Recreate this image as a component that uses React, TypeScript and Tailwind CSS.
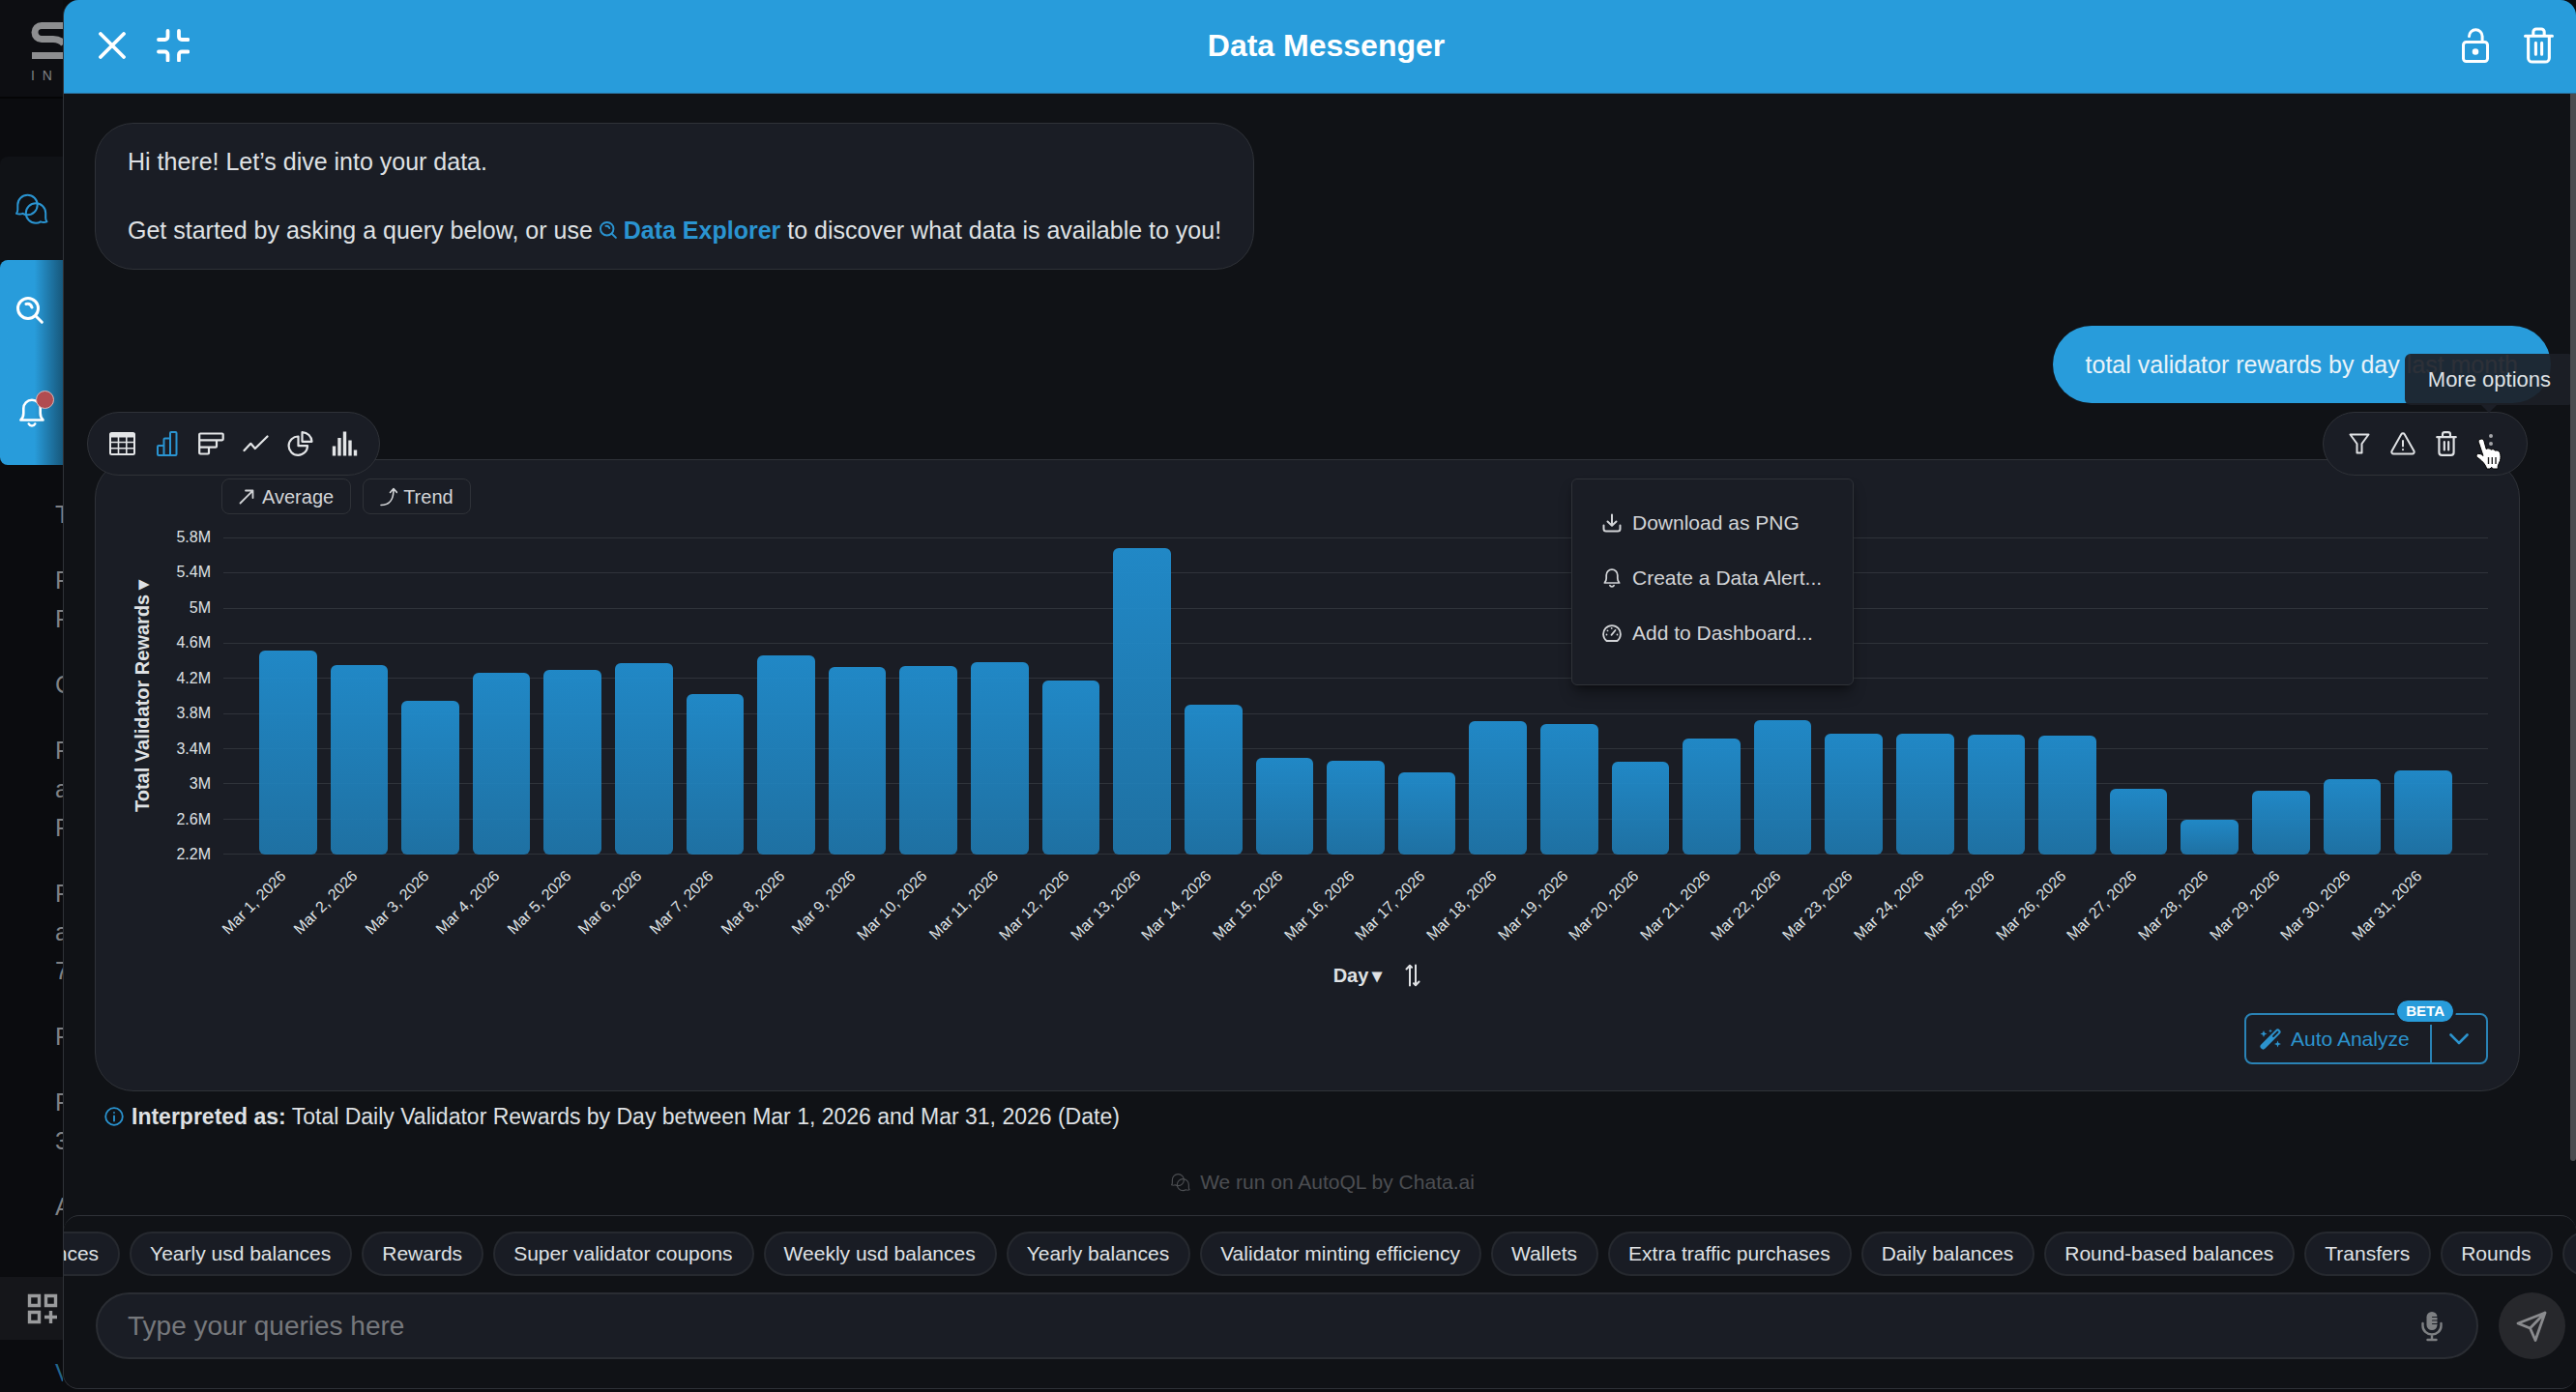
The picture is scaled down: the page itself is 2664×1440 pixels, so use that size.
import type { ReactNode } from 'react'

const REWARDS = [
  4.52, 4.35, 3.95, 4.26, 4.3, 4.37, 4.02, 4.46, 4.33, 4.34, 4.38, 4.18, 5.68, 3.9, 3.3, 3.26, 3.13,
  3.72, 3.68, 3.25, 3.52, 3.73, 3.57, 3.57, 3.56, 3.55, 2.95, 2.59, 2.93, 3.06, 3.15,
]
const AXIS_MIN = 2.2
const AXIS_MAX = 5.8
const TICKS = ['5.8M', '5.4M', '5M', '4.6M', '4.2M', '3.8M', '3.4M', '3M', '2.6M', '2.2M']

const TOPICS = [
  'Yearly usd balances',
  'Rewards',
  'Super validator coupons',
  'Weekly usd balances',
  'Yearly balances',
  'Validator minting efficiency',
  'Wallets',
  'Extra traffic purchases',
  'Daily balances',
  'Round-based balances',
  'Transfers',
  'Rounds',
  'Balances',
]

// Rows of the page that stays visible behind the drawer
const BACKDROP_ROWS = [['T'], ['F', 'F'], ['C'], ['F', 'a', 'F'], ['F', 'a', '7'], ['F'], ['F', '3'], ['A']]

interface IconProps {
  className: string
  box: string
  width?: number
  children: ReactNode
}

const Icon = ({ className, box, width = 2, children }: IconProps) => (
  <svg
    aria-hidden
    viewBox={box}
    className={`shrink-0 ${className}`}
    fill="none"
    stroke="currentColor"
    strokeWidth={width}
    strokeLinecap="round"
    strokeLinejoin="round"
  >
    {children}
  </svg>
)

const BUBBLE =
  'M1 20.8c1-1.2 1.3-2.4 1.3-3.8v-5a10.2 10.2 0 1 1 10.2 10.2c-2.2 0-3.8-.6-5-1.4-2 .9-4.4.9-6.5 0z'

const BubblesIcon = ({ className }: { className: string }) => (
  <Icon className={className} box="0 0 34 32">
    <path d={BUBBLE} />
    <path d={BUBBLE} transform="translate(33.5 8.5) scale(-1 1)" />
  </Icon>
)

const SearchIcon = ({ className, width = 3 }: { className: string; width?: number }) => (
  <Icon className={className} box="0 0 28 28" width={width}>
    <circle cx="12" cy="12" r="10.5" />
    <path d="M19.8 19.8 26.3 26.3M10 7.5c3-.8 5.2.8 6 3.5" />
  </Icon>
)

const TrashIcon = ({ className }: { className: string }) => (
  <Icon className={className} box="0 0 30 36" width={3}>
    <path d="M1.5 8.5h27M4.5 8.5v22a4 4 0 0 0 4 4h13a4 4 0 0 0 4-4v-22M9.5 8V4.5a3 3 0 0 1 3-3h5a3 3 0 0 1 3 3V8M12 15.5v11.5M18 15.5v11.5" />
  </Icon>
)

const BellIcon = ({ className }: { className: string }) => (
  <Icon className={className} box="0 0 26 30" width={2.6}>
    <path d="M1.5 22.5h23c-2-2-2.8-4-2.8-7v-5a8.7 8.7 0 0 0-17.4 0v5c0 3-.8 5-2.8 7zM9.8 26.5c1.2 2.6 5.2 2.6 6.4 0" />
  </Icon>
)

const CHART_TYPES = [
  {
    label: 'Table',
    icon: (
      <Icon className="w-[27px] h-6" box="0 0 27 24">
        <rect x="1" y="1" width="25" height="22" rx="1.5" />
        <path d="M1.5 3.5h24" strokeWidth={4} />
        <path d="M9.5 4v18M17.8 4v18M1 10.5h25M1 16.8h25" strokeWidth={1.6} />
      </Icon>
    ),
  },
  {
    label: 'Column chart',
    active: true,
    icon: (
      <Icon className="w-[27px] h-[26px]" box="-3 0 27 26">
        <path d="M1 16a1 1 0 0 1 1-1h5.5v10H2a1 1 0 0 1-1-1zM7.5 8.5a1 1 0 0 1 1-1H14V25H7.5zM14 2a1 1 0 0 1 1-1h4.500a1 1 0 0 1 1 1v22a1 1 0 0 1-1 1H14z" />
      </Icon>
    ),
  },
  {
    label: 'Bar chart',
    icon: (
      <Icon className="w-[27px] h-6" box="0 0 27 24" width={2.2}>
        <path d="M1.2 2.500a1 1 0 0 1 1-1h22.500a1 1 0 0 1 1 1v4.800a1 1 0 0 1-1 1H1.200zM1.200 8.500h17.800v6.200a1 1 0 0 1-1 1H1.200zM1.200 15.500h9.800v6a1 1 0 0 1-1 1H2.200a1 1 0 0 1-1-1z" />
      </Icon>
    ),
  },
  {
    label: 'Line chart',
    icon: (
      <Icon className="w-[27px] h-6" box="0 0 27 24" width={2.2}>
        <path d="M1.500 19 8.300 11.800 12.800 17 25.500 4.500" />
      </Icon>
    ),
  },
  {
    label: 'Pie chart',
    icon: (
      <Icon className="w-[27px] h-[26px]" box="0 0 27 26" width={2.2}>
        <path d="M11.500 5.500A9.700 9.700 0 1 0 21 15.200h-9.500zM15.500 1.200v9.600h10c-.3-5.600-4.400-9.300-10-9.600z" />
      </Icon>
    ),
  },
  {
    label: 'Histogram',
    icon: (
      <Icon className="w-[27px] h-[26px]" box="0 0 27 26" width={3.4}>
        <path d="M2.500 15.500v10M8 7v18.500M13.500 .5v25M19 9.500v16M24.500 19.500v6" strokeLinecap="butt" />
      </Icon>
    ),
  },
]

const MENU_ITEMS = [
  {
    label: 'Download as PNG',
    icon: (
      <Icon className="size-5" box="0 0 20 20">
        <path d="M10 1.500v11M5.500 8.500l4.500 4.300 4.500-4.300M1.500 12.500v3.500a2.500 2.500 0 0 0 2.500 2.500h12a2.500 2.500 0 0 0 2.500-2.500v-3.500" />
      </Icon>
    ),
  },
  { label: 'Create a Data Alert...', icon: <BellIcon className="size-5" /> },
  {
    label: 'Add to Dashboard...',
    icon: (
      <Icon className="size-5" box="0 0 20 20" width={1.8}>
        <path d="M4.500 18a8.900 8.900 0 1 1 11 0z" />
        <path d="M9.500 11.800 13.500 7M4.500 11.500v.1M5.500 7.300v.1M9.700 4.800v.1M15.500 11.500v.1" />
      </Icon>
    ),
  },
]

const EdgeTabs = () => (
  <nav className="absolute inset-x-0 top-[162px] flex flex-col">
    <button
      aria-label="Data Messenger"
      className="flex h-[107px] items-center rounded-tl-lg bg-[#101216] pl-4 text-[#2a94d1]"
    >
      <BubblesIcon className="w-[34px] h-8" />
    </button>
    <div className="flex flex-col rounded-l-lg bg-linear-to-r from-[#289cdb] from-55% to-[#17587c] text-white">
      <button aria-label="Data Explorer" className="flex h-[104px] items-center pl-[17px]">
        <SearchIcon className="size-7" />
      </button>
      <button aria-label="Notifications" className="flex h-[108px] items-center pl-5">
        <span className="relative">
          <BellIcon className="w-[26px] h-[30px]" />
          <span className="absolute -top-2 -right-2.5 size-[19px] rounded-full border border-[#d9b6b8] bg-[#b14c50]" />
        </span>
      </button>
    </div>
  </nav>
)

const Backdrop = () => (
  <aside className="relative flex w-[65px] shrink-0 flex-col overflow-hidden bg-[#0b0c0f] text-[#7f8184]">
    <header className="flex h-[102px] flex-col items-start gap-2.5 border-b-2 border-[#050506] bg-[#0d0e12] pt-[22px] pl-8">
      <svg aria-hidden viewBox="0 0 34 40" className="h-10 w-[34px] shrink-0" fill="none" stroke="#8d8e90" strokeWidth={7}>
        <path d="M34 4.500H11a7 7 0 0 0 0 14h12c6 0 9.500 3 11 5M1 35.500h33" />
      </svg>
      <span className="text-sm whitespace-pre leading-3">I  N</span>
    </header>
    <div className="mt-[410px] flex flex-col gap-7 pl-[57px] text-[25px] leading-10">
      {BACKDROP_ROWS.map((lines, i) => (
        <div key={i}>
          {lines.map((line, j) => (
            <p key={j}>{line}</p>
          ))}
        </div>
      ))}
    </div>
    <div className="mt-[53px] flex h-[65px] shrink-0 items-center bg-[#15161a] pl-7">
      <svg aria-hidden viewBox="0 0 32 32" className="size-8" fill="none" stroke="#9a9b9d" strokeWidth={3.4}>
        <path d="M2.500 2.500h10v10h-10zM19.500 2.500h10v10h-10zM2.500 19.500h10v10h-10zM24.500 18v13M18 24.500h13" />
      </svg>
    </div>
    <p className="pt-3.5 pl-[57px] text-[25px] leading-10 text-[#22648b]">V</p>
    <EdgeTabs />
  </aside>
)

const DrawerHeader = () => (
  <header className="grid h-[97px] shrink-0 grid-cols-[1fr_auto_1fr] items-center border-b border-[#2b6f99] bg-[#289cdb] pr-[23px] pb-0.5 pl-9 text-white">
    <div className="flex items-center gap-8">
      <button aria-label="Close">
        <Icon className="size-7" box="0 0 28 28" width={3.8}>
          <path d="M2 2l24 24M26 2 2 26" />
        </Icon>
      </button>
      <button aria-label="Exit full screen">
        <Icon className="size-[34px]" box="0 0 34 34" width={3.8}>
          <path d="M2 11h6.500a3 3 0 0 0 3-3V2M23 2v6a3 3 0 0 0 3 3h6.500M2 23.500h6.500a3 3 0 0 1 3 3v6M23 32.500v-6a3 3 0 0 1 3-3h6.500" />
        </Icon>
      </button>
    </div>
    <h1 className="text-[32px] leading-10 font-bold">Data Messenger</h1>
    <div className="flex items-center justify-end gap-9">
      <button aria-label="Unlock drawer">
        <Icon className="w-7 h-9" box="0 0 28 36" width={3}>
          <rect x="1.500" y="14.500" width="25" height="20" rx="3" />
          <path d="M7.500 8.500a6.800 6.800 0 0 1 13.600 0V14" />
          <circle cx="14" cy="24.500" r="1.800" fill="currentColor" />
        </Icon>
      </button>
      <button aria-label="Clear messages">
        <TrashIcon className="w-[31px] h-[38px]" />
      </button>
    </div>
  </header>
)

const RewardsChart = () => (
  <div className="mt-6 flex pr-8 pl-9">
    <button className="flex w-6 rotate-180 items-center justify-center gap-1 text-xl leading-6 font-bold whitespace-nowrap [text-orientation:sideways] [writing-mode:vertical-rl]">
      Total Validator Rewards <span className="leading-6">▾</span>
    </button>
    <div className="-my-2 flex w-[59px] flex-col justify-between text-right text-base leading-4">
      {TICKS.map((tick) => (
        <span key={tick}>{tick}</span>
      ))}
    </div>
    <div className="relative ml-[13px] flex-1">
      <div className="absolute inset-0 flex flex-col justify-between">
        {TICKS.map((tick) => (
          <div key={tick} className="h-px bg-[#2f333a]" />
        ))}
      </div>
      <div className="relative flex h-[328px] px-[30px]">
        {REWARDS.map((value, i) => (
          <div key={i} className="relative flex flex-1 flex-col justify-end px-[7px]">
            <div
              className="rounded-md bg-linear-to-b from-[#2190d2]/93 to-[#1f7db5]/87"
              style={{ height: `${((value - AXIS_MIN) / (AXIS_MAX - AXIS_MIN)) * 100}%` }}
            />
            <span className="absolute top-full right-1/2 mt-3.5 mr-2.5 origin-top-right -rotate-45 text-base leading-4 whitespace-nowrap">
              Mar {i + 1}, 2026
            </span>
          </div>
        ))}
      </div>
    </div>
  </div>
)

const ResponseCard = () => (
  <article className="relative flex flex-col rounded-[40px] border border-[#2f3238] bg-[#1a1d25] pb-[27px]">
    <div className="flex gap-3 pt-[19px] pl-[130px] text-xl leading-6 text-[#d2d4d7]">
      <button className="flex h-[37px] items-center gap-2 rounded-lg border border-[#2f3238] px-[17px]">
        <Icon className="size-4" box="0 0 16 16" width={1.8}>
          <path d="M1.500 14.500 14 2M7 1.500h7.500V9" />
        </Icon>
        Average
      </button>
      <button className="flex h-[37px] items-center gap-1.5 rounded-lg border border-[#2f3238] px-[17px]">
        <Icon className="w-[18px] h-5" box="0 0 18 20" width={1.6}>
          <path d="M1 18.500c9 0 13-5 13-16.500M10.500 5.500 14 1.500l3.500 4" />
        </Icon>
        Trend
      </button>
    </div>

    <RewardsChart />

    <div className="mt-[109px] flex h-8 items-center justify-center gap-6 pl-[144px]">
      <button className="flex items-center gap-1 text-xl leading-6 font-bold">
        Day <span className="leading-6">▾</span>
      </button>
      <button aria-label="Sort">
        <Icon className="w-4 h-6" box="0 0 16 24">
          <path d="M5 22.500V2M1.500 5.500 5 1.800l2 2M11 1.500V22M14.500 18.500 11 22.200l-2-2" />
        </Icon>
      </button>
    </div>

    <div className="mt-[23px] mr-8 flex self-end rounded-lg border-2 border-[#2a83b6] text-[21px] text-[#2c93cd]">
      <button className="relative flex h-[49px] w-[192px] items-center gap-2.5 border-r-2 border-[#2a83b6] pl-[14px]">
        <Icon className="size-[22px]" box="0 0 22 22" width={1}>
          <path d="M3.500 18.500 18.500 3.500" strokeWidth={6} />
          <path d="M14 8 18.500 3.500" stroke="#1a1d25" strokeWidth={1.800} />
          <path
            d="M4 2l1 2.500L7.500 5.500 5 6.500 4 9 3 6.500.5 5.500 3 4.500zM11 .5l.6 1.400L13 2.500l-1.400.6L11 4.500l-.6-1.400L9 2.500l1.400-.6zM18.500 12.500l.9 2.600 2.600.9-2.600.9-.9 2.600-.9-2.600-2.600-.9 2.600-.9z"
            fill="currentColor"
            stroke="none"
          />
        </Icon>
        Auto Analyze
        <span className="absolute -top-[15px] -right-6 rounded-full bg-[#289cdb] px-[9px] text-[15px] leading-[22px] font-bold text-white outline-3 outline-[#1a1d25]">
          BETA
        </span>
      </button>
      <button aria-label="Analysis options" className="flex w-[56px] items-center justify-center">
        <Icon className="w-5 h-3" box="0 0 20 12" width={2.600}>
          <path d="M1.500 1.500 10 10l8.500-8.500" />
        </Icon>
      </button>
    </div>

    <div className="absolute -top-[50px] -left-[9px] flex h-[66px] items-center gap-[19px] rounded-full border border-[#2f3238] bg-[#1a1d25] px-[22px]">
      {CHART_TYPES.map(({ label, active, icon }) => (
        <button key={label} aria-label={label} className={active ? 'text-[#2a94d1]' : 'text-[#e3e5e7]'}>
          {icon}
        </button>
      ))}
    </div>

    <div className="absolute -top-[50px] -right-[9px] flex h-[66px] w-[212px] items-center gap-[21px] rounded-full border border-[#2f3238] bg-[#1a1d25] pl-[26px]">
      <button aria-label="Filter">
        <Icon className="size-[22px]" box="0 0 22 22">
          <path d="M1.500 1.500h19L13.500 11v9.500h-5V11z" />
        </Icon>
      </button>
      <button aria-label="Report a problem">
        <Icon className="w-[26px] h-6" box="0 0 26 24">
          <path d="M11.300 2.300 1.600 19.500a2 2 0 0 0 1.700 3h19.400a2 2 0 0 0 1.700-3L14.700 2.300a2 2 0 0 0-3.400 0zM13 9v5.500M13 18v.2" />
        </Icon>
      </button>
      <button aria-label="Delete">
        <TrashIcon className="w-[22px] h-[26px]" />
      </button>
      <button aria-label="More options" aria-expanded className="ml-2 text-[#a5a6a9]">
        <Icon className="w-3 h-6" box="0 0 12 24" width={4}>
          <path d="M6 4v.1M6 12v.1M6 20v.1" />
        </Icon>
      </button>
      <div
        role="tooltip"
        className="absolute -top-[61px] -right-[49px] rounded-md bg-[#1c1f27]/92 px-6 text-[22px] leading-[53px] whitespace-nowrap after:absolute after:top-full after:right-20 after:border-8 after:border-transparent after:border-t-[#1c1f27]"
      >
        More options
      </div>
      <svg aria-hidden viewBox="0 0 28 33" className="absolute top-[26px] right-[25px] h-[33px] w-7">
        <path
          d="M5 1.300c1.900-.7 3.400.2 4 2.200l2.200 8c2-1.200 3.900-.7 4.700.7 1.900-1 3.900-.3 4.500 1 2-.8 4.300.1 5 2.200.8 2.800.9 5.300.1 8.100l-2.300 5.500V32h-5l-1.500-1.700L15 32h-3.200l-1.500-3.500c-2-3.400-5-6-8.300-8.200-1.500-1.200-1.200-3.200.5-3.800 2-.6 4 .6 5.500 2L3.300 4.500C2.900 3 3.500 1.800 5 1.300z"
          fill="#fff"
          stroke="#000"
          strokeWidth={1}
        />
        <path d="M13.500 20v7M17.300 20v7M21 20v7" stroke="#222" strokeWidth={1.400} />
      </svg>
    </div>

    <ul className="absolute top-[19px] right-[688px] flex h-[214px] w-[292px] flex-col rounded-md border border-[#2f3238] bg-[#1a1d25] pt-4 shadow-lg shadow-black/40">
      {MENU_ITEMS.map(({ label, icon }) => (
        <li key={label}>
          <button className="flex h-[57px] w-full items-center gap-[11px] pl-[31px] text-[21px] text-[#d2d4d7]">
            {icon}
            {label}
          </button>
        </li>
      ))}
    </ul>
  </article>
)

const Pill = ({ className = '', children }: { className?: string; children: ReactNode }) => (
  <button
    className={`h-[46px] shrink-0 rounded-full border-2 border-[#26292f] bg-[#191c24] pr-5 pl-[19px] text-[21px] whitespace-nowrap ${className}`}
  >
    {children}
  </button>
)

const Composer = () => (
  <footer className="shrink-0 rounded-t-2xl border-t border-[#2f3238] bg-[#101216] pb-[30px]">
    <div className="flex gap-2.5 overflow-hidden pt-4">
      <Pill className="-ml-[69px]">balances</Pill>
      {TOPICS.map((topic) => (
        <Pill key={topic}>{topic}</Pill>
      ))}
    </div>
    <form className="mt-[17px] flex gap-[21px] pr-[11px] pl-[33px]">
      <div className="flex h-[69px] flex-1 items-center rounded-full border-2 border-[#2a2d33] bg-[#1a1d25] pr-[35px] pl-[31px]">
        <input
          aria-label="Query"
          placeholder="Type your queries here"
          className="flex-1 bg-transparent text-[28px] outline-none placeholder:text-[#76787c]"
        />
        <button type="button" aria-label="Use microphone" className="text-[#7e8083]">
          <Icon className="w-[22px] h-8" box="0 0 22 32" width={2.400}>
            <rect x="5.500" y="1" width="11" height="19" rx="5.500" fill="currentColor" stroke="none" />
            <path d="M1.500 13v2.500a9.500 9 0 0 0 19 0V13M11 25v5M6.500 30h9" />
            <path d="M11.500 6.500H17M11.500 10H17M11.500 13.500H17" stroke="#1a1d25" strokeWidth={1.200} />
          </Icon>
        </button>
      </div>
      <button
        aria-label="Send"
        className="flex size-[69px] items-center justify-center rounded-full bg-[#27282c] pr-0.5 text-[#8a8b8e]"
      >
        <Icon className="size-8" box="0 0 32 32" width={2.800}>
          <path d="M30 2 2 13l12.500 5L20 30.500zM14.500 18 30 2" />
        </Icon>
      </button>
    </form>
  </footer>
)

export default function App() {
  return (
    <div className="flex h-screen overflow-hidden bg-[#0b0c0f] font-['Liberation_Sans',Arial,sans-serif] text-[#dfe1e4]">
      <Backdrop />
      <main className="mb-[3px] flex min-w-0 flex-1 flex-col overflow-hidden rounded-2xl border-b border-l border-[#2f3238] bg-[#101216]">
        <DrawerHeader />
        <section className="relative flex min-h-0 flex-1 flex-col overflow-hidden pt-[30px] pr-[58px] pl-8">
          <div className="self-start rounded-[40px] border border-[#2f3238] bg-[#1a1d25] px-[33px] py-1 text-[25px] leading-[71px]">
            <p>Hi there! Let’s dive into your data.</p>
            <p>
              Get started by asking a query below, or use{' '}
              <a href="#explorer" className="font-bold text-[#2a94d1]">
                <SearchIcon className="mb-1 inline size-[18px]" /> Data Explorer
              </a>{' '}
              to discover what data is available to you!
            </p>
          </div>
          <div className="mt-[58px] -mr-8 self-end rounded-full bg-[#289cdb] px-[34px] text-[25px] leading-[80px] text-[#e9f3f9]">
            total validator rewards by day last month
          </div>
          <div className="mt-[58px]">
            <ResponseCard />
          </div>
          <p className="mt-2.5 flex items-center gap-2 pl-2.5 text-[23px] leading-8">
            <Icon className="size-5 text-[#2a94d1]" box="0 0 20 20" width={1.800}>
              <circle cx="10" cy="10" r="8.800" />
              <path d="M10 9.500v5M10 6v.1" />
            </Icon>
            <span>
              <strong>Interpreted as:</strong> Total Daily Validator Rewards by Day between Mar 1, 2026 and Mar 31, 2026
              (Date)
            </span>
          </p>
          <p className="mt-9 flex items-center justify-center gap-2.5 pl-8 text-[21px] leading-8 text-[#4c4e52]">
            <BubblesIcon className="size-5" />
            We run on AutoQL by Chata.ai
          </p>
          <div className="absolute top-0 right-0 h-[1104px] w-[6px] rounded-b-md bg-[#4b4c50]" />
        </section>
        <Composer />
      </main>
    </div>
  )
}
